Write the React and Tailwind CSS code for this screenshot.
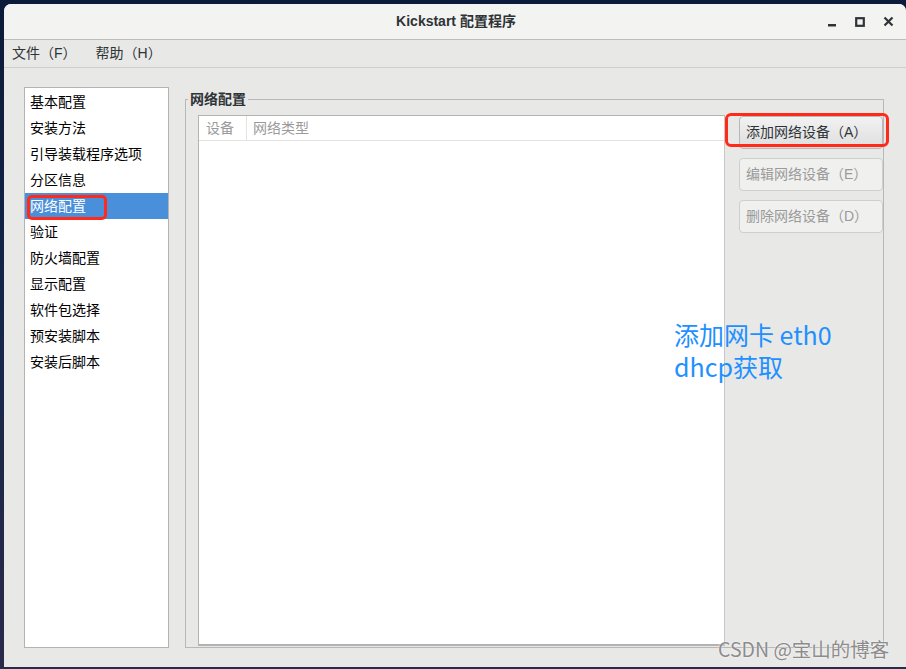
import React from 'react'

const cjk = { fontFamily: '"Liberation Sans", "Noto Sans CJK SC", sans-serif' }

const sections = [
  '基本配置',
  '安装方法',
  '引导装载程序选项',
  '分区信息',
  '网络配置',
  '验证',
  '防火墙配置',
  '显示配置',
  '软件包选择',
  '预安装脚本',
  '安装后脚本',
]

function TitleBar() {
  return (
    <div className="grid grid-cols-[1fr_auto_1fr] items-center h-[36px] bg-[#f3f3f2] border-b border-[#bdbdbd] rounded-t-[7px]">
      <div />
      <div className="text-[14px] font-bold text-[#2e3436] pl-[2px]">Kickstart 配置程序</div>
      <div className="flex justify-end items-center gap-[18px] pr-[12px] text-[#2e3436]">
        <svg width="10" height="10" viewBox="0 0 10 10">
          <rect x="1" y="7" width="8" height="2.5" fill="#2e3436" />
        </svg>
        <svg width="10" height="10" viewBox="0 0 10 10">
          <rect x="1.2" y="1.2" width="7.6" height="7.6" fill="none" stroke="#2e3436" strokeWidth="2.2" />
        </svg>
        <svg width="11" height="11" viewBox="0 0 11 11">
          <path d="M1.5 1.5 L9.5 9.5 M9.5 1.5 L1.5 9.5" stroke="#2e3436" strokeWidth="2.2" />
        </svg>
      </div>
    </div>
  )
}

function MenuBar() {
  return (
    <div className="flex items-center h-[28px] border-b border-[#cfcfcd] text-[14px] text-[#2e3436] pl-[8px] gap-[19px]">
      <span>文件（F）</span>
      <span>帮助（H）</span>
    </div>
  )
}

function SectionList() {
  return (
    <div className="relative w-[145px] shrink-0 bg-white border border-[#b3b3b3] pt-[1px]">
      {sections.map((s, i) => (
        <div
          key={s}
          className={`h-[26px] flex items-center pl-[5px] text-[14px] ${
            i === 4 ? 'bg-[#4a8fd9] text-white' : 'text-black'
          }`}
        >
          {s}
        </div>
      ))}
      {/* red annotation */}
      <div className="absolute left-[2px] top-[107px] w-[80px] h-[25px] border-[3px] border-[#ff2a1a] rounded-[5px]" />
    </div>
  )
}

function Btn({ children, disabled }) {
  return (
    <button
      type="button"
      className={`w-[144px] h-[33px] rounded-[4px] border text-[14px] text-left pl-[6px] ${
        disabled
          ? 'border-[#cfcfcf] bg-[#f0f0ef] text-[#9a9a9a]'
          : 'border-[#b8b8b8] bg-gradient-to-b from-[#f2f2f2] to-[#dedede] text-[#2e3436]'
      }`}
    >
      {children}
    </button>
  )
}

function NetworkFrame() {
  return (
    <div className="relative flex-1 mt-[12px] border border-[#b8b8b8] flex">
      <span className="absolute -top-[11px] left-[2px] px-[2px] bg-[#e8e8e7] text-[14px] font-bold text-[#2e3436] leading-[20px]">
        网络配置
      </span>
      <div className="flex-1 ml-[12px] mt-[15px] mb-[1px] bg-white border-l border-t border-[#b3b3b3] border-r border-r-[#c8c8c8] border-b-2 border-b-[#b3b3b3] flex flex-col">
        <div className="flex h-[25px] border-b border-[#e3e3e3] text-[14px] text-[#9a9a9a]">
          <div className="w-[48px] pl-[7px] flex items-center border-r border-[#e3e3e3]">设备</div>
          <div className="pl-[6px] flex items-center">网络类型</div>
        </div>
      </div>
      <div className="relative w-[158px] flex flex-col items-end pt-[16px] gap-[9px]">
        <Btn>添加网络设备（A）</Btn>
        <Btn disabled>编辑网络设备（E）</Btn>
        <Btn disabled>删除网络设备（D）</Btn>
        {/* red annotation */}
        <div className="absolute left-0 top-[13px] w-[164px] h-[34px] border-[3px] border-[#ff2a1a] rounded-[6px]" />
      </div>
    </div>
  )
}

export default function App() {
  return (
    <div
      className="relative w-[906px] h-[669px] overflow-hidden bg-gradient-to-b from-[#0b1a3a] via-[#16264a] to-[#2a2a4a] pl-[4px] pt-[4px] pb-[2px]"
      style={cjk}
    >
      <div className="w-full h-full flex flex-col bg-[#e8e8e7] rounded-t-[7px]">
        <TitleBar />
        <MenuBar />
        <div className="flex flex-1 pl-[20px] pr-[22px] pt-[19px] pb-[19px] gap-[16px]">
          <SectionList />
          <NetworkFrame />
        </div>
      </div>

      {/* blue annotation text */}
      <div className="absolute left-[674px] top-[318px] text-[25px] leading-[32px] text-[#1e90ff]" style={{ fontFamily: '"Noto Sans CJK SC", sans-serif' }}>
        <div>添加网卡 eth0</div>
        <div>dhcp获取</div>
      </div>

      {/* watermark */}
      <div
        className="absolute left-[718px] top-[636px] text-[19.5px] leading-[26px] text-[#8c8c8c] [text-shadow:0_0_2px_#ffffff]"
        style={{ fontFamily: '"Noto Sans CJK SC", sans-serif' }}
      >
        CSDN @宝山的博客
      </div>
    </div>
  )
}
